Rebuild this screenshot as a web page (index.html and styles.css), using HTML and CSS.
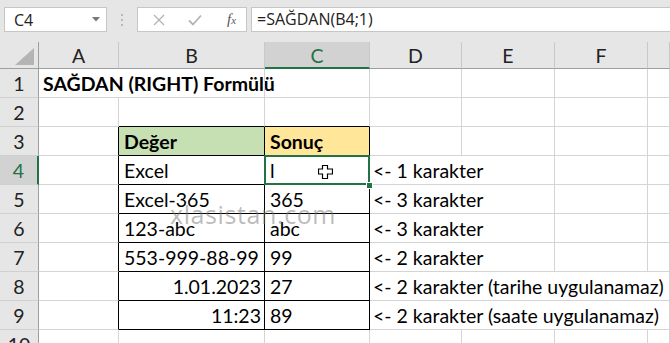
FILE: index.html
```html
<!DOCTYPE html>
<html lang="tr">
<head>
    <meta charset="UTF-8">
    <meta name="viewport" content="width=device-width, initial-scale=1.0">
    <title>SAĞDAN (RIGHT) Formülü</title>
    <link rel="stylesheet" href="styles.css">
</head>
<body>
    <div class="formula-bar">
        <div class="name-box">
            <span>C4</span>
            <svg class="drop" width="8" height="5" viewBox="0 0 8 5"><polygon points="0,0 8,0 4,4.5" fill="#777"/></svg>
        </div>
        <div class="grip"><i></i><i></i><i></i></div>
        <div class="fx-buttons">
            <svg width="12" height="12" viewBox="0 0 12 12"><path d="M1 1 L11 11 M11 1 L1 11" stroke="#b3b3b3" stroke-width="1.3" fill="none"/></svg>
            <svg width="14" height="12" viewBox="0 0 14 12"><path d="M1 6.5 L5 10.5 L13 1.5" stroke="#b3b3b3" stroke-width="1.8" fill="none"/></svg>
            <span class="fx">f<small>x</small></span>
        </div>
        <div class="formula-input">=SAĞDAN(B4;1)</div>
    </div>

    <div class="sheet">
        <div class="corner"><svg width="19" height="17" viewBox="0 0 19 17"><polygon points="19,0 19,17 0,17" fill="#b4b4b4"/></svg></div>
        <div class="col-head">A</div>
        <div class="col-head">B</div>
        <div class="col-head active">C</div>
        <div class="col-head">D</div>
        <div class="col-head">E</div>
        <div class="col-head">F</div>
        <div class="col-head last"></div>

        <div class="row-head">1</div>
        <div class="cell title">SAĞDAN (RIGHT) Formülü</div>
        <div class="cell"></div>
        <div class="cell"></div>
        <div class="cell"></div>
        <div class="cell"></div>
        <div class="cell"></div>
        <div class="cell"></div>

        <div class="row-head">2</div>
        <div class="cell"></div>
        <div class="cell top-edge"></div>
        <div class="cell top-edge"></div>
        <div class="cell"></div>
        <div class="cell"></div>
        <div class="cell"></div>
        <div class="cell"></div>

        <div class="row-head">3</div>
        <div class="cell left-edge"></div>
        <div class="cell boxed head-green">Değer</div>
        <div class="cell boxed head-yellow">Sonuç</div>
        <div class="cell"></div>
        <div class="cell"></div>
        <div class="cell"></div>
        <div class="cell"></div>

        <div class="row-head active">4</div>
        <div class="cell left-edge"></div>
        <div class="cell boxed">Excel</div>
        <div class="cell boxed selected">l
            <span class="handle"></span>
            <svg class="cursor" width="15" height="14" viewBox="0 0 15 14"><polygon points="4.5,0.5 9.5,0.5 9.5,4 14.5,4 14.5,9 9.5,9 9.5,13.5 4.5,13.5 4.5,9 0.5,9 0.5,4 4.5,4" fill="#fff" stroke="#000" stroke-width="1.2"/></svg>
        </div>
        <div class="cell note span2">&lt;- 1 karakter</div>
        <div class="cell"></div>
        <div class="cell"></div>

        <div class="row-head">5</div>
        <div class="cell left-edge"></div>
        <div class="cell boxed">Excel-365</div>
        <div class="cell boxed">365</div>
        <div class="cell note span2">&lt;- 3 karakter</div>
        <div class="cell"></div>
        <div class="cell"></div>

        <div class="row-head">6</div>
        <div class="cell left-edge"></div>
        <div class="cell boxed">123-abc</div>
        <div class="cell boxed">abc</div>
        <div class="cell note span2">&lt;- 3 karakter</div>
        <div class="cell"></div>
        <div class="cell"></div>

        <div class="row-head">7</div>
        <div class="cell left-edge"></div>
        <div class="cell boxed">553-999-88-99</div>
        <div class="cell boxed">99</div>
        <div class="cell note span2">&lt;- 2 karakter</div>
        <div class="cell"></div>
        <div class="cell"></div>

        <div class="row-head">8</div>
        <div class="cell left-edge"></div>
        <div class="cell boxed num">1.01.2023</div>
        <div class="cell boxed">27</div>
        <div class="cell note span4">&lt;- 2 karakter (tarihe uygulanamaz)</div>

        <div class="row-head">9</div>
        <div class="cell left-edge"></div>
        <div class="cell boxed num">11:23</div>
        <div class="cell boxed">89</div>
        <div class="cell note span4">&lt;- 2 karakter (saate uygulanamaz)</div>

        <div class="row-head">10</div>
        <div class="cell"></div>
        <div class="cell"></div>
        <div class="cell"></div>
        <div class="cell"></div>
        <div class="cell"></div>
        <div class="cell"></div>
        <div class="cell"></div>
    </div>

    <div class="watermark">xlasistan.com</div>
</body>
</html>
```

FILE: styles.css
```css
html, body {
    margin: 0;
    padding: 0;
}

body {
    width: 670px;
    height: 343px;
    overflow: hidden;
    position: relative;
    background-color: #e6e6e6;
    font-family: Lato, "Liberation Sans", sans-serif;
}

/* formula bar */
.formula-bar {
    display: flex;
    align-items: flex-start;
    height: 42px;
    padding-top: 7px;
    box-sizing: border-box;
    font-family: "Open Sans", "Noto Sans", sans-serif;
    font-size: 16px;
    color: #222;
}

.name-box {
    display: flex;
    align-items: center;
    justify-content: space-between;
    margin-left: 4px;
    width: 103px;
    height: 25px;
    padding: 0 6px 0 9px;
    box-sizing: border-box;
    background: #fff;
    border: 1px solid #c6c6c6;
}

.grip {
    display: flex;
    flex-direction: column;
    gap: 3px;
    width: 30px;
    height: 25px;
    align-items: center;
    justify-content: center;
}

.grip i {
    display: block;
    width: 2px;
    height: 2px;
    background: #b9b9b9;
}

.fx-buttons {
    display: flex;
    align-items: center;
    width: 110px;
    height: 25px;
    padding-left: 15px;
    gap: 23px;
    box-sizing: border-box;
    background: #fff;
    border: 1px solid #c6c6c6;
}

.fx {
    font-family: "Liberation Serif", serif;
    font-style: italic;
    font-size: 15px;
    color: #555;
    margin-left: 2px;
}

.fx small {
    font-size: 11px;
}

.formula-input {
    flex: 1;
    margin-left: 4px;
    height: 25px;
    padding-left: 5px;
    line-height: 23px;
    box-sizing: border-box;
    background: #fff;
    border: 1px solid #c6c6c6;
    border-right: none;
}

/* sheet */
.sheet {
    display: grid;
    grid-template-columns: 39px 80px 146px 105px 92px 93px 93px 1fr;
    grid-template-rows: 27px repeat(10, 29px);
    background: #fff;
    font-size: 19.5px;
    color: #000;
}

.corner {
    display: flex;
    align-items: flex-end;
    justify-content: flex-end;
    padding: 0 4px 3px 0;
    background: #e6e6e6;
    border-right: 1px solid #9e9e9e;
    border-bottom: 1px solid #9e9e9e;
}

.corner svg {
    display: block;
}

.col-head {
    display: flex;
    align-items: center;
    justify-content: center;
    padding-top: 1px;
    background: #e6e6e6;
    color: #222;
    border-right: 1px solid #c8c8c8;
    border-bottom: 1px solid #9e9e9e;
}

.col-head.active {
    background: #d2d2d2;
    color: #217346;
    border-bottom: 2px solid #217346;
}

.row-head {
    display: flex;
    align-items: center;
    justify-content: center;
    padding-top: 1px;
    background: #e6e6e6;
    color: #222;
    border-right: 1px solid #9e9e9e;
    border-bottom: 1px solid #d0d0d0;
}

.row-head.active {
    background: #d2d2d2;
    color: #217346;
    border-right: 2px solid #217346;
}

.cell {
    display: flex;
    align-items: flex-end;
    padding: 0 4px 2px 5px;
    white-space: nowrap;
    border-right: 1px solid #d4d4d4;
    border-bottom: 1px solid #d4d4d4;
    position: relative;
}

.title {
    font-weight: 700;
    padding-left: 4px;
    overflow: visible;
    border-right: none;
}

.top-edge {
    border-bottom-color: #000;
}

.left-edge {
    border-right-color: #000;
}

.boxed {
    border-right-color: #000;
    border-bottom-color: #000;
}

.head-green {
    background: #c6e0b4;
    font-weight: 700;
}

.head-yellow {
    background: #ffe699;
    font-weight: 700;
}

.num {
    justify-content: flex-end;
    padding-right: 3px;
}

.note {
    padding-left: 3px;
}

.span2 {
    grid-column: span 2;
}

.span4 {
    grid-column: span 4;
}

.selected::after {
    content: "";
    position: absolute;
    top: -1px;
    left: -1px;
    right: -1px;
    bottom: -1px;
    border: 2px solid #217346;
}

.handle {
    position: absolute;
    right: -4px;
    bottom: -5px;
    width: 5px;
    height: 5px;
    background: #217346;
    border: 1px solid #fff;
    z-index: 2;
}

.cursor {
    position: absolute;
    left: 53px;
    top: 9px;
    z-index: 3;
}

.watermark {
    position: absolute;
    left: 170px;
    top: 197px;
    font-family: "Open Sans", "Noto Sans", sans-serif;
    font-size: 25px;
    letter-spacing: 0.6px;
    color: rgba(120, 120, 120, 0.5);
}
```
